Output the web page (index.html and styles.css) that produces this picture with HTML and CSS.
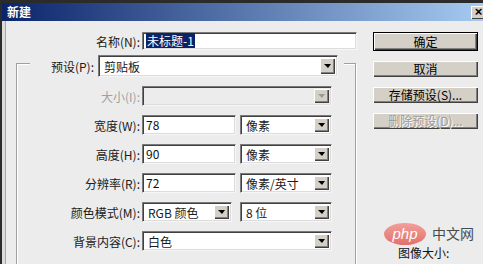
FILE: index.html
```html
<!DOCTYPE html>
<html lang="zh">
<head>
    <meta charset="UTF-8">
    <meta name="viewport" content="width=device-width, initial-scale=1.0">
    <title>新建</title>
    <link rel="stylesheet" href="styles.css">
</head>
<body>
    <div class="window">
        <!-- title bar -->
        <div class="titlebar">
            <span class="title">新建</span>
            <span class="close">×</span>
        </div>

        <div class="content">
            <div class="form">
                <!-- Name -->
                <div class="row name-row">
                    <label class="label">名称(N):</label>
                    <div class="field name-field"><span class="selected">未标题-1</span></div>
                </div>

                <div class="group">
                    <!-- Preset sits on the group border -->
                    <div class="preset">
                        <label class="preset-label">预设(P):</label>
                        <div class="select preset-select"><span class="value">剪贴板</span><span class="arrow"></span></div>
                    </div>

                    <div class="rows">
                        <!-- Size -->
                        <div class="row">
                            <label class="label disabled">大小(I):</label>
                            <div class="select select-full is-disabled"><span class="value"></span><span class="arrow"></span></div>
                        </div>

                        <!-- Width -->
                        <div class="row">
                            <label class="label">宽度(W):</label>
                            <div class="field num-field">78</div>
                            <div class="select unit-select"><span class="value">像素</span><span class="arrow"></span></div>
                        </div>

                        <!-- Height -->
                        <div class="row">
                            <label class="label">高度(H):</label>
                            <div class="field num-field">90</div>
                            <div class="select unit-select"><span class="value">像素</span><span class="arrow"></span></div>
                        </div>

                        <!-- Resolution -->
                        <div class="row">
                            <label class="label">分辨率(R):</label>
                            <div class="field num-field">72</div>
                            <div class="select unit-select"><span class="value">像素/英寸</span><span class="arrow"></span></div>
                        </div>

                        <!-- Color mode -->
                        <div class="row">
                            <label class="label">颜色模式(M):</label>
                            <div class="select mode-select"><span class="value">RGB 颜色</span><span class="arrow"></span></div>
                            <div class="select bit-select"><span class="value">8 位</span><span class="arrow"></span></div>
                        </div>

                        <!-- Background -->
                        <div class="row">
                            <label class="label">背景内容(C):</label>
                            <div class="select select-full"><span class="value">白色</span><span class="arrow"></span></div>
                        </div>
                    </div>
                </div>
            </div>

            <!-- buttons -->
            <div class="side">
                <button class="btn btn-default">确定</button>
                <button class="btn">取消</button>
                <button class="btn">存储预设(S)...</button>
                <button class="btn" disabled>删除预设(D)...</button>
                <div class="image-size">图像大小:</div>
            </div>
        </div>

        <!-- watermark -->
        <div class="watermark">
            <svg width="94" height="24" viewBox="0 0 94 24">
                <defs>
                    <linearGradient id="php" x1="0" y1="0" x2="0" y2="1">
                        <stop offset="0" stop-color="#f2a09b"/>
                        <stop offset="1" stop-color="#e2706c"/>
                    </linearGradient>
                </defs>
                <ellipse cx="21" cy="12" rx="21" ry="11" fill="url(#php)"/>
                <text x="21" y="16.5" text-anchor="middle" font-family="Liberation Sans, sans-serif" font-style="italic" font-size="15" fill="#fff">php</text>
                <text x="48" y="17" font-family="Noto Sans CJK SC, sans-serif" font-size="14" fill="#4a4a4a">中文网</text>
            </svg>
        </div>
    </div>
</body>
</html>
```

FILE: styles.css
```css
*{
    margin: 0;
    padding: 0;
    box-sizing: border-box;
}
body{
    background: #2b2b2b;
    overflow: hidden;
    font-family: "Noto Sans CJK SC", "Liberation Sans", sans-serif;
    font-size: 12px;
    color: #1a1a1a;
}

.window{
    position: relative;
    margin: 3px 0 0 2px;
    height: 261px;
    background: #ececec;
}

/* title bar */
.titlebar{
    display: flex;
    align-items: center;
    height: 18px;
    background: linear-gradient(to right, #0a246a, #a6caf0);
}
.title{
    padding-left: 5px;
    color: #fff;
    font-weight: bold;
    line-height: 18px;
}
.close{
    margin-left: auto;
    margin-right: -3px;
    width: 15px;
    height: 13px;
    background: #d4d0c8;
    box-shadow: inset 1px 1px #fff, inset -1px -1px #404040;
    font-family: "Liberation Sans", sans-serif;
    font-weight: bold;
    font-size: 13px;
    line-height: 12px;
    text-align: center;
    color: #000;
}

.content{
    display: flex;
    padding: 11px 0 0 14px;
    height: 243px;
    box-shadow: inset 3px 0 #dcdcdc, inset 4px 0 #a8a8a8;
}

.form{
    flex: none;
    width: 341px;
}

.row{
    display: flex;
    align-items: center;
    height: 20px;
}
.name-row{
    height: 18px;
}
.label{
    width: 124px;
    margin-right: 2px;
    text-align: right;
    white-space: nowrap;
}
.group .label{
    width: 123px;
}
.label.disabled{
    color: #a0a0a0;
}

/* sunken fields */
.field{
    height: 100%;
    padding-left: 3px;
    background: #fff;
    border: 1px solid;
    border-color: #7a7a7a #f6f6f6 #f6f6f6 #7a7a7a;
    box-shadow: inset 1px 1px #404040, inset -1px -1px #dcdcdc;
    line-height: 17px;
    color: #111;
}
.name-field{
    width: 215px;
    line-height: 15px;
}
.selected{
    display: inline-block;
    padding: 0 1px;
    background: #0a246a;
    color: #fff;
}
.num-field{
    width: 94px;
    margin-right: 4px;
}

/* dropdowns */
.select{
    display: flex;
    height: 100%;
    background: #fff;
    border: 1px solid;
    border-color: #7a7a7a #f6f6f6 #f6f6f6 #7a7a7a;
    box-shadow: inset 1px 1px #404040, inset -1px -1px #dcdcdc;
    padding: 2px;
}
.select .value{
    flex: 1;
    padding-left: 3px;
    line-height: 15px;
    white-space: nowrap;
}
.select .arrow{
    position: relative;
    width: 15px;
    background: #d4d0c8;
    box-shadow: inset 1px 1px #fff, inset -1px -1px #404040, inset -2px -2px #808080;
}
.select .arrow::after{
    content: "";
    position: absolute;
    left: 4px;
    top: 50%;
    margin-top: -2px;
    border-top: 4px solid #000;
    border-left: 4px solid transparent;
    border-right: 3px solid transparent;
}
.select.is-disabled{
    background: #ececec;
}
.select.is-disabled .arrow::after{
    border-top-color: #9a9a9a;
}

.select-full{
    width: 190px;
}
.unit-select{
    width: 92px;
}
.mode-select{
    width: 90px;
    margin-right: 8px;
}
.bit-select{
    width: 92px;
}

/* group box, etched border */
.group{
    margin-top: 13px;
    padding-bottom: 30px;
    width: 340px;
    border: 1px solid #a0a0a0;
    box-shadow: inset 1px 1px #fff, 1px 1px #fff;
}
.preset{
    display: flex;
    align-items: center;
    width: max-content;
    margin: -9px 0 0 13px;
    padding-right: 6px;
    background: #ececec;
}
.preset-label{
    width: 64px;
    margin-right: 4px;
    text-align: right;
}
.preset-select{
    width: 240px;
    height: 22px;
}
.preset-select .value{
    line-height: 17px;
}

.rows{
    display: flex;
    flex-direction: column;
    gap: 9px;
    margin-top: 9px;
}

/* buttons */
.side{
    display: flex;
    flex-direction: column;
    margin-left: 16px;
    width: 105px;
}
.btn{
    height: 16px;
    margin-top: 10px;
    background: #d4d0c8;
    border: none;
    box-shadow: inset 1px 1px #fff, inset -1px -1px #404040, inset -2px -2px #808080;
    font-family: "Noto Sans CJK SC", "Liberation Sans", sans-serif;
    font-size: 12px;
    line-height: 14px;
    color: #000;
}
.btn-default{
    margin-top: 0;
    height: 19px;
    border: 1px solid #000;
}
.btn:disabled{
    color: #9a9a9a;
    text-shadow: 1px 1px #fff;
}

.image-size{
    margin-top: 116px;
    padding-left: 25px;
    line-height: 16px;
    color: #111;
}

.watermark{
    position: absolute;
    left: 382px;
    top: 219px;
}
```
